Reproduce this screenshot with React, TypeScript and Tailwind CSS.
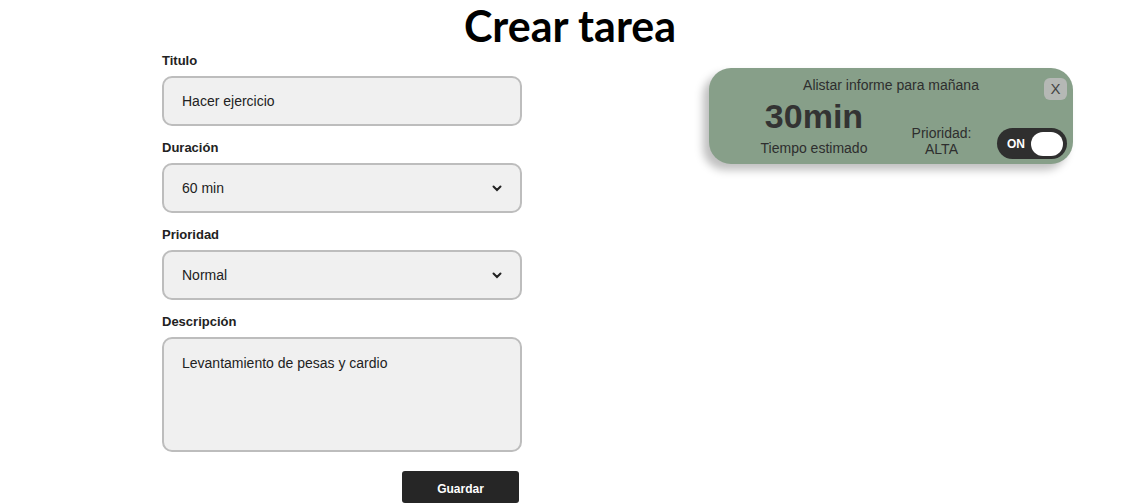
import { useState } from "react";

function Label({ children }: { children: React.ReactNode }) {
  return <label className="block text-[13px] font-bold text-[#222] mb-[8px] leading-[15px]">{children}</label>;
}

const fieldClass =
  "block w-[360px] h-[50px] rounded-[10px] border-2 border-[#bdbdbd] bg-[#f0f0f0] px-[18px] text-[14px] text-[#222] outline-none";

function Chevron() {
  return (
    <svg width="10" height="7" viewBox="0 0 10 7" className="absolute right-[20px] top-[22px]">
      <path d="M1.5 1.5 L5 5 L8.5 1.5" fill="none" stroke="#222" strokeWidth="2" strokeLinecap="round" />
    </svg>
  );
}

function TaskForm() {
  const [title, setTitle] = useState("Hacer ejercicio");
  const [desc, setDesc] = useState("Levantamiento de pesas y cardio");

  return (
    <div className="flex flex-col w-[360px]" style={{ fontFamily: "'Liberation Sans', Arial, sans-serif" }}>
      <Label>Titulo</Label>
      <input className={fieldClass} value={title} onChange={(e) => setTitle(e.target.value)} />

      <div className="mt-[14px]">
        <Label>Duración</Label>
        <div className="relative">
          <div className={fieldClass + " flex items-center"}>60 min</div>
          <Chevron />
        </div>
      </div>

      <div className="mt-[14px]">
        <Label>Prioridad</Label>
        <div className="relative">
          <div className={fieldClass + " flex items-center"}>Normal</div>
          <Chevron />
        </div>
      </div>

      <div className="mt-[14px]">
        <Label>Descripción</Label>
        <textarea
          className="w-[360px] h-[115px] rounded-[10px] border-2 border-[#bdbdbd] bg-[#f0f0f0] px-[18px] pt-[14px] text-[14px] text-[#222] outline-none resize-none block"
          value={desc}
          onChange={(e) => setDesc(e.target.value)}
        />
      </div>

      <div className="flex justify-end mt-[19px] pr-[3px]">
        <button className="w-[117px] h-[32px] rounded-[3px] bg-[#262626] text-white text-[12px] font-bold pt-[3px]">
          Guardar
        </button>
      </div>
    </div>
  );
}

function TaskCard() {
  const [on, setOn] = useState(true);
  return (
    <div
      className="relative w-[364px] h-[96px] rounded-[22px] bg-[#879f89] shadow-[-6px_6px_8px_rgba(0,0,0,0.25)] text-[#2e2e2e]"
      style={{ fontFamily: "'Liberation Sans', Arial, sans-serif" }}
    >
      <div className="text-center text-[14px] pt-[9px] leading-[17px]">Alistar informe para mañana</div>
      <button className="absolute right-[6px] top-[10px] w-[23px] h-[22px] rounded-[6px] bg-[#b5b8b5] text-[#444] text-[15px] leading-[22px]">
        X
      </button>
      <div className="flex items-end mt-[4px]">
        <div className="w-[210px] flex flex-col items-center">
          <div className="text-[34px] font-bold leading-[36px] text-[#333]">30min</div>
          <div className="text-[14px] leading-[17px] mt-[6px]">Tiempo estimado</div>
        </div>
        <div className="w-[45px] flex flex-col items-center text-[14px] leading-[16px]">
          <div className="whitespace-nowrap">Prioridad:</div>
          <div>ALTA</div>
        </div>
        <button
          onClick={() => setOn(!on)}
          className="ml-[33px] mb-[-2px] w-[70px] h-[31px] rounded-full bg-[#2f2f2f] flex items-center justify-between pl-[10px] pr-[4px]"
        >
          <span className="text-white text-[12px] font-bold">{on ? "ON" : "OFF"}</span>
          <span className="w-[32px] h-[24px] rounded-full bg-white" />
        </button>
      </div>
    </div>
  );
}

export default function App() {
  return (
    <div className="w-[1140px] h-[504px] bg-white overflow-hidden">
      <h1
        className="text-center text-[43px] font-bold leading-[52px] text-black"
        style={{ fontFamily: "Lato, 'Noto Sans', sans-serif" }}
      >
        Crear tarea
      </h1>
      <div className="flex pl-[162px] mt-[1px]">
        <TaskForm />
        <div className="ml-[187px] mt-[15px]">
          <TaskCard />
        </div>
      </div>
    </div>
  );
}
